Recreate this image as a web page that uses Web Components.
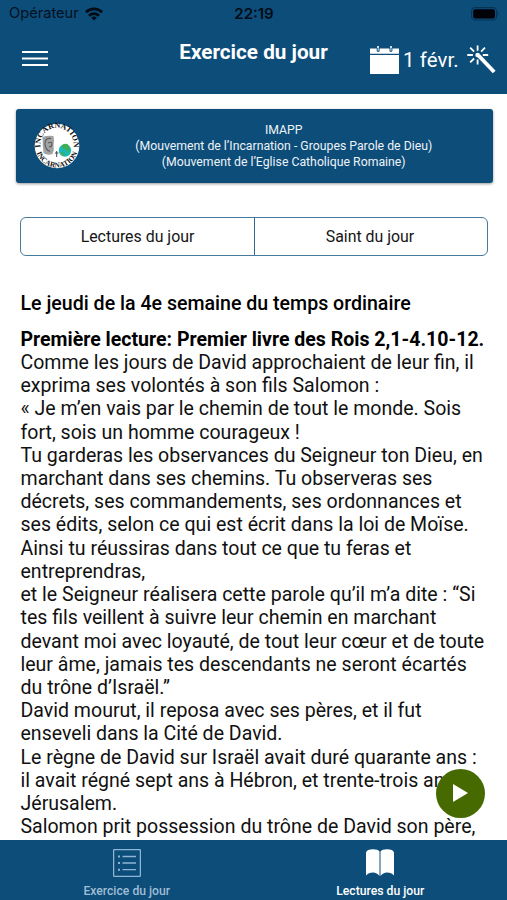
<!DOCTYPE html>
<html lang="fr">
<head>
<meta charset="utf-8">
<title>Lectures du jour</title>
<style>
html,body{margin:0;height:900px;overflow:hidden;background:#fff}
body{font-family:Roboto,"Noto Sans",sans-serif;--blue:#0d4d7a}
</style>
</head>
<body>
<app-screen></app-screen>
<script>
const define = (name, html) => customElements.define(name, class extends HTMLElement {
  constructor() {
    super();
    const t = document.createElement('template');
    t.innerHTML = html;
    this.attachShadow({mode: 'open'}).append(t.content.cloneNode(true));
  }
});

define('status-bar', `
<style>
:host{display:grid;grid-template-columns:1fr auto 1fr;align-items:center;height:27px;padding:0 8px 0 9px;color:#02111d;font:15px/27px Inter,sans-serif;box-sizing:border-box}
.left{display:flex;align-items:center;gap:6px;letter-spacing:.02px;font-size:14.6px}
.time{font-weight:600;font-size:15px;letter-spacing:0;color:#000c16}
.bat{justify-self:end}
svg{display:block}
</style>
<div class="left"><span>Opérateur</span>
<svg width="18" height="14" viewBox="0 0 18 14" fill="none" stroke="#000c16" stroke-width="2.7"><path d="M.9 5.2a11.5 11.5 0 0 1 16.2 0M4 8.7a7.1 7.1 0 0 1 10 0"/><path d="M9 13.6 6.2 10.8a4 4 0 0 1 5.6 0Z" fill="#000c16" stroke="none"/></svg></div>
<div class="time">22:19</div>
<svg class="bat" width="28" height="14" viewBox="0 0 28 14"><rect x=".6" y=".6" width="25" height="12.4" rx="3.6" fill="none" stroke="#073455" stroke-width="1.1"/><rect x="2.2" y="2.2" width="21.8" height="9.2" rx="2" fill="#000208"/><path d="M26.6 4.6q2 2.200 0 4.400Z" fill="#073455"/></svg>`);

define('menu-button', `
<style>:host{display:block}svg{display:block}</style>
<svg width="26" height="18" viewBox="0 0 26 18" stroke="#fff" stroke-width="2"><path d="M0 2h26M0 8.5h26M0 15h26"/></svg>`);

define('date-picker', `
<style>:host{display:flex;align-items:center;gap:4px;color:#fff;font-size:20.4px;line-height:30px;letter-spacing:.1px;white-space:nowrap}svg{display:block}span{position:relative;top:-.5px}</style>
<svg width="29" height="30" viewBox="0 0 29 30"><path fill="#fff" d="M0 3.5h7.2V1h1.6v2.5h11.4V1h1.6v2.5H29V8.7H0zM0 9.9h29V29H0z"/><path stroke="#0d4d7a" stroke-width="1" fill="none" d="M7.2 3v3.3h1.900V3M20 3v3.3h1.900V3"/></svg>
<span><slot></slot></span>`);

define('magic-wand', `
<style>:host{display:block}svg{display:block}</style>
<svg width="30" height="30" viewBox="0 0 30 30" fill="none" stroke="#fff" stroke-linecap="butt"><path stroke-width="3.9" d="m11.500 10.500 15.700 16.500"/><circle cx="10.600" cy="10" r="2.300" fill="#fff" stroke="none"/><path stroke-width="1.800" d="M10.600.4v5.400M10.600 14.400v5.200M.3 10h5.600M15.800 10h5.400M3.200 2.700l3.900 3.900M18 2.700l-3.900 3.900M3.200 17.400l3.900-3.900"/></svg>`);

define('app-header', `
<style>
:host{display:block;height:93.5px;background:var(--blue)}
.bar{display:grid;grid-template-columns:157px 193px 1fr;height:66px}
menu-button{margin:23px 0 0 22px}
h1{margin:10.5px 0 0;text-align:center;color:#fff;font-size:20.7px;line-height:28px;font-weight:700}
.actions{display:flex;margin:18px 0 0 20px;height:30px}
magic-wand{margin-left:8px}
</style>
<status-bar></status-bar>
<div class="bar"><menu-button></menu-button><h1><slot></slot></h1>
<div class="actions"><date-picker>1 févr.</date-picker><magic-wand></magic-wand></div></div>`);

define('incarnation-logo', `
<style>:host{display:block}svg{display:block;overflow:visible}text{font:700 8px "Liberation Serif",serif;fill:#111}</style>
<svg width="46" height="46" viewBox="0 0 46 46">
<defs><path id="top" d="M6.800 25A16.600 16.600 0 1 1 39.200 25"/><path id="bot" d="M1.500 23a21.500 21.500 0 0 0 43 0"/></defs>
<circle cx="23" cy="23" r="22.300" fill="#fff"/>
<text><textPath href="#top" startOffset="50%" text-anchor="middle">INCARNATION</textPath></text>
<text style="font-size:7.4px"><textPath href="#bot" startOffset="50%" text-anchor="middle">INCARNATION</textPath></text>
<path d="M8.500 14q5-2 11-1 1 5 0 9 1 5-1 9-5 2-9-1-1-8-1-16z" fill="#a2a2a2"/>
<path d="M17 15.500q-6-1-6 5 0 6 5 8M14 20q4-2 4 1t-3 3" fill="none" stroke="#5a5a5a" stroke-width="1.100"/>
<path d="M22.700 28v6M20.900 30h3.600" stroke="#444" stroke-width="1"/>
<circle cx="31" cy="27.500" r="6.200" fill="#19b9b6"/><path d="M28 22q5-3 7 1 2 4-1 6l-3-3-3-1zM27 29l4 1-1 3q-3-1-3-4z" fill="#3fae55"/>
</svg>`);

define('group-banner', `
<style>
:host{display:grid;grid-template-columns:46px 1fr;align-items:center;width:477px;height:74.5px;margin:15px 0 0 15.5px;padding:0 16px 0 18.5px;box-sizing:border-box;background:var(--blue);border-radius:3px;box-shadow:0 1px 3px #0006}
p{margin:0 0 0 11px;text-align:center;color:#edf3f7;font-size:12.28px;line-height:16px}
</style>
<incarnation-logo></incarnation-logo><p><slot></slot></p>`);

define('segmented-tabs', `
<style>
:host{display:grid;grid-template-columns:1fr 1fr;margin:34px 19px 0 20px;height:39px;border:1.5px solid #477a9d;border-radius:6px;box-sizing:border-box;color:#151515;font-size:15.9px;line-height:37px;text-align:center}
::slotted(span:last-child){border-left:1px solid #2f688f;padding-right:2px}
</style><slot></slot>`);

define('reading-text', `
<style>
:host{display:block;padding:36px 0 0 20.5px;color:#111;font-size:19.55px;line-height:23.22px;white-space:nowrap}
::slotted(h2){margin:0 0 12.5px;font-size:19.58px;line-height:23.2px;font-weight:500;color:#000}
::slotted(h3){margin:0;font-size:19.55px;line-height:23.2px;font-weight:700;color:#000}
::slotted(div){height:23.22px}
</style><slot></slot>`);

define('play-button', `
<style>:host{position:absolute;left:436px;top:769px;width:49px;height:49px;border-radius:50%;background:#476a00;display:grid}
svg{margin:14.5px 0 0 17px}</style>
<svg width="16" height="19" viewBox="0 0 16 19"><path d="M0 0v18L15 9z" fill="#fff"/></svg>`);

define('tab-item', `
<style>:host{display:flex;flex-direction:column;align-items:center;padding-top:9px;color:#9fbdd3;font-size:12.2px;line-height:16px;font-weight:500}
:host([active]){color:#fff}
span{margin-top:6px}::slotted(svg){display:block}</style>
<slot name="icon"></slot><span><slot></slot></span>`);

define('tab-bar', `
<style>:host{position:absolute;left:0;top:839.5px;width:507px;height:60.5px;background:var(--blue);display:grid;grid-template-columns:1fr 1fr}</style>
<tab-item>Exercice du jour<svg slot="icon" width="28" height="28" viewBox="0 0 28 28" fill="none" stroke="#8eb5d2" stroke-width="1.3"><rect x=".6" y=".6" width="26.8" height="26.8" rx=".8"/><path d="M9.5 7.5h13.5M9.5 14h13.5M9.5 20.7h13.5"/><path stroke-width="2" d="M5 7.5h2M5 14h2M5 20.7h2"/></svg></tab-item>
<tab-item active>Lectures du jour<svg slot="icon" width="28" height="28" viewBox="0 0 28 28"><path fill="#fff" d="M0 3.500Q1 .3 7 .3 12 .3 13.500 2.500V27Q11 23.500 7 23.500 2.500 23.500 0 26.500zM28 3.500Q27 .3 21 .3 16 .3 14.500 2.500V27Q17 23.500 21 23.500 25.500 23.500 28 26.500z"/></svg></tab-item>`);

define('app-screen', `
<style>:host{display:block;position:relative;width:507px;height:900px;overflow:hidden;background:#fff}</style>
<app-header>Exercice du jour</app-header>
<group-banner>IMAPP<br>(Mouvement de l’Incarnation - Groupes Parole de Dieu)<br>(Mouvement de l’Eglise Catholique Romaine)</group-banner>
<segmented-tabs><span>Lectures du jour</span><span>Saint du jour</span></segmented-tabs>
<reading-text>
<h2>Le jeudi de la 4e semaine du temps ordinaire</h2>
<h3>Première lecture: Premier livre des Rois 2,1-4.10-12.</h3>
<div>Comme les jours de David approchaient de leur fin, il</div>
<div>exprima ses volontés à son fils Salomon :</div>
<div>« Je m’en vais par le chemin de tout le monde. Sois</div>
<div>fort, sois un homme courageux !</div>
<div>Tu garderas les observances du Seigneur ton Dieu, en</div>
<div>marchant dans ses chemins. Tu observeras ses</div>
<div>décrets, ses commandements, ses ordonnances et</div>
<div>ses édits, selon ce qui est écrit dans la loi de Moïse.</div>
<div>Ainsi tu réussiras dans tout ce que tu feras et</div>
<div>entreprendras,</div>
<div>et le Seigneur réalisera cette parole qu’il m’a dite : “Si</div>
<div>tes fils veillent à suivre leur chemin en marchant</div>
<div>devant moi avec loyauté, de tout leur cœur et de toute</div>
<div>leur âme, jamais tes descendants ne seront écartés</div>
<div>du trône d’Israël.”</div>
<div>David mourut, il reposa avec ses pères, et il fut</div>
<div>enseveli dans la Cité de David.</div>
<div>Le règne de David sur Israël avait duré quarante ans :</div>
<div>il avait régné sept ans à Hébron, et trente-trois ans</div>
<div>Jérusalem.</div>
<div>Salomon prit possession du trône de David son père,</div>
</reading-text>
<play-button></play-button>
<tab-bar></tab-bar>`);
</script>
</body>
</html>
